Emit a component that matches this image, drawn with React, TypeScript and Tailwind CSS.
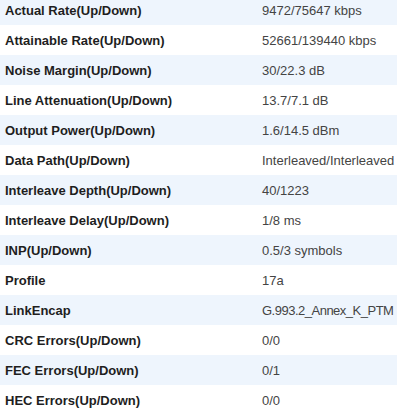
const rows: [string, string][] = [
  ["Actual Rate(Up/Down)", "9472/75647 kbps"],
  ["Attainable Rate(Up/Down)", "52661/139440 kbps"],
  ["Noise Margin(Up/Down)", "30/22.3 dB"],
  ["Line Attenuation(Up/Down)", "13.7/7.1 dB"],
  ["Output Power(Up/Down)", "1.6/14.5 dBm"],
  ["Data Path(Up/Down)", "Interleaved/Interleaved"],
  ["Interleave Depth(Up/Down)", "40/1223"],
  ["Interleave Delay(Up/Down)", "1/8 ms"],
  ["INP(Up/Down)", "0.5/3 symbols"],
  ["Profile", "17a"],
  ["LinkEncap", "G.993.2_Annex_K_PTM"],
  ["CRC Errors(Up/Down)", "0/0"],
  ["FEC Errors(Up/Down)", "0/1"],
  ["HEC Errors(Up/Down)", "0/0"],
];

export default function App() {
  return (
    <div className="w-[397px] h-[411px] overflow-hidden bg-white font-['Liberation_Sans',Arial,sans-serif] text-[13px]">
      <div className="-mt-[5px]">
        {rows.map(([label, value], i) => (
          <div
            key={label}
            className={`flex items-center h-[30px] pt-[2px] ${i % 2 == 0 ? "bg-[#eef5fd]" : "bg-white"}`}
          >
            <div className="w-[262px] shrink-0 pl-[5px] font-bold text-[#1e1e1e]">{label}</div>
            <div className={`text-[#444] whitespace-nowrap ${value.includes("_") ? "tracking-[-0.5px]" : ""}`}>
              {value}
            </div>
          </div>
        ))}
      </div>
    </div>
  );
}
